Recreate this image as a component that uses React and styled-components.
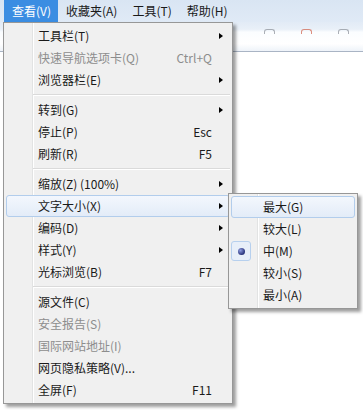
import React from "react";
import styled, { createGlobalStyle, css } from "styled-components";

const Global = createGlobalStyle`
  html, body { margin: 0; padding: 0; background: #fff; }
  body { font-family: "Noto Sans CJK SC", "Microsoft YaHei", sans-serif; }
`;

const Page = styled.div`
  position: relative;
  width: 363px;
  height: 410px;
  overflow: hidden;
  background: #fff;
  font-family: "Noto Sans CJK SC", sans-serif;
  font-size: 12px;
  color: #1a1a1a;
`;

const MenuBar = styled.div`
  display: flex;
  height: 22px;
  padding-left: 4px;
  background: linear-gradient(#d9e5f3, #e0eaf6);
`;

const TopItem = styled.div`
  display: flex;
  align-items: center;
  padding: 0 7px 0 8px;
  line-height: 22px;
  color: ${(p) => (p.$active ? "#fff" : "#1a1a1a")};
  background: ${(p) => (p.$active ? "#3b8de2" : "transparent")};
`;

const Toolbar = styled.div`
  height: 29px;
  border-bottom: 1px solid #a9b4c4;
  background: linear-gradient(#e2ebf6 0%, #e9f0f8 25%, #fbfdff 35%, #ffffff 75%, #eef3f9 100%);
  display: flex;
  align-items: center;
  gap: 26px;
  padding-left: 264px;
`;

const TbIcon = styled.span`
  display: block;
  width: 9px;
  height: 4px;
  margin-top: -10px;
  border-top: 1px solid ${(p) => p.$c};
  border-left: 1px solid ${(p) => p.$c};
  border-right: 1px solid ${(p) => p.$c};
  border-radius: 3px 3px 0 0;
  opacity: 0.7;
`;

const Menu = styled.div`
  position: absolute;
  left: ${(p) => p.$x}px;
  top: ${(p) => p.$y}px;
  width: ${(p) => p.$w}px;
  box-sizing: border-box;
  padding: 2px 0;
  border: 1px solid #979797;
  background:
    linear-gradient(to right, transparent 28px, #e2e3e3 28px, #e2e3e3 29px, #ffffff 29px, #ffffff 30px, transparent 30px),
    #f0f0f0;
  box-shadow: 3px 3px 3px rgba(0, 0, 0, 0.38);
`;

const Item = styled.div`
  display: grid;
  grid-template-columns: 31px 1fr auto 17px;
  align-items: center;
  height: 22px;
  box-sizing: border-box;
  margin: 0 2px;
  border: 1px solid transparent;
  border-radius: 3px;
  line-height: 20px;
  color: ${(p) => (p.$disabled ? "#8d8d8d" : "#1a1a1a")};
  ${(p) =>
    p.$hover &&
    css`
      border-color: #b2cdec;
      background: linear-gradient(#f3f7fd, #e3ecf8);
    `}
`;

const Check = styled.span`
  width: 20px;
  height: 20px;
  box-sizing: border-box;
  margin-left: -1px;
  display: flex;
  align-items: center;
  justify-content: center;
  border: 1px solid #b7d0ee;
  border-radius: 3px;
  background: #e8eff9;
`;

const Dot = styled.span`
  width: 7px;
  height: 7px;
  border-radius: 50%;
  background: radial-gradient(circle at 35% 35%, #8f9de0, #29337a 70%);
`;

const Label = styled.span`
  white-space: nowrap;
`;

const Shortcut = styled.span`
  white-space: nowrap;
  text-align: right;
`;

const Arrow = styled.span`
  justify-self: center;
  width: 0;
  height: 0;
  margin-left: 1px;
  border-left: 4px solid #000;
  border-top: 3.5px solid transparent;
  border-bottom: 3.5px solid transparent;
`;

const Sep = styled.div`
  height: 8px;
  margin-left: 29px;
  margin-right: 2px;
  display: flex;
  flex-direction: column;
  justify-content: center;
  &::before {
    content: "";
    display: block;
    height: 1px;
    background: #dadada;
  }
  &::after {
    content: "";
    display: block;
    height: 1px;
    background: #fff;
  }
`;

const main = [
  { l: "工具栏(T)", sub: true },
  { l: "快速导航选项卡(Q)", s: "Ctrl+Q", d: true },
  { l: "浏览器栏(E)", sub: true },
  "-",
  { l: "转到(G)", sub: true },
  { l: "停止(P)", s: "Esc" },
  { l: "刷新(R)", s: "F5" },
  "-",
  { l: "缩放(Z) (100%)", sub: true },
  { l: "文字大小(X)", sub: true, h: true },
  { l: "编码(D)", sub: true },
  { l: "样式(Y)", sub: true },
  { l: "光标浏览(B)", s: "F7" },
  "-",
  { l: "源文件(C)" },
  { l: "安全报告(S)", d: true },
  { l: "国际网站地址(I)", d: true },
  { l: "网页隐私策略(V)..." },
  { l: "全屏(F)", s: "F11" },
];

const sizes = [
  { l: "最大(G)", h: true },
  { l: "较大(L)" },
  { l: "中(M)", c: true },
  { l: "较小(S)" },
  { l: "最小(A)" },
];

function Row({ it }) {
  return (
    <Item $disabled={it.d} $hover={it.h}>
      <span>
        {it.c && (
          <Check>
            <Dot />
          </Check>
        )}
      </span>
      <Label>{it.l}</Label>
      <Shortcut>{it.s || ""}</Shortcut>
      {it.sub ? <Arrow /> : <span />}
    </Item>
  );
}

export default function App() {
  return (
    <Page>
      <Global />
      <MenuBar>
        <TopItem $active>查看(V)</TopItem>
        <TopItem>收藏夹(A)</TopItem>
        <TopItem>工具(T)</TopItem>
        <TopItem>帮助(H)</TopItem>
      </MenuBar>
      <Toolbar>
        <TbIcon $c="#8a8f98" />
        <TbIcon $c="#d0604a" />
        <TbIcon $c="#8a8f98" />
      </Toolbar>
      <Menu $x={3} $y={22} $w={230}>
        {main.map((it, i) =>
          it === "-" ? <Sep key={i} /> : <Row key={i} it={it} />
        )}
      </Menu>
      <Menu $x={228} $y={193} $w={130}>
        {sizes.map((it, i) => (
          <Row key={i} it={it} />
        ))}
      </Menu>
    </Page>
  );
}
